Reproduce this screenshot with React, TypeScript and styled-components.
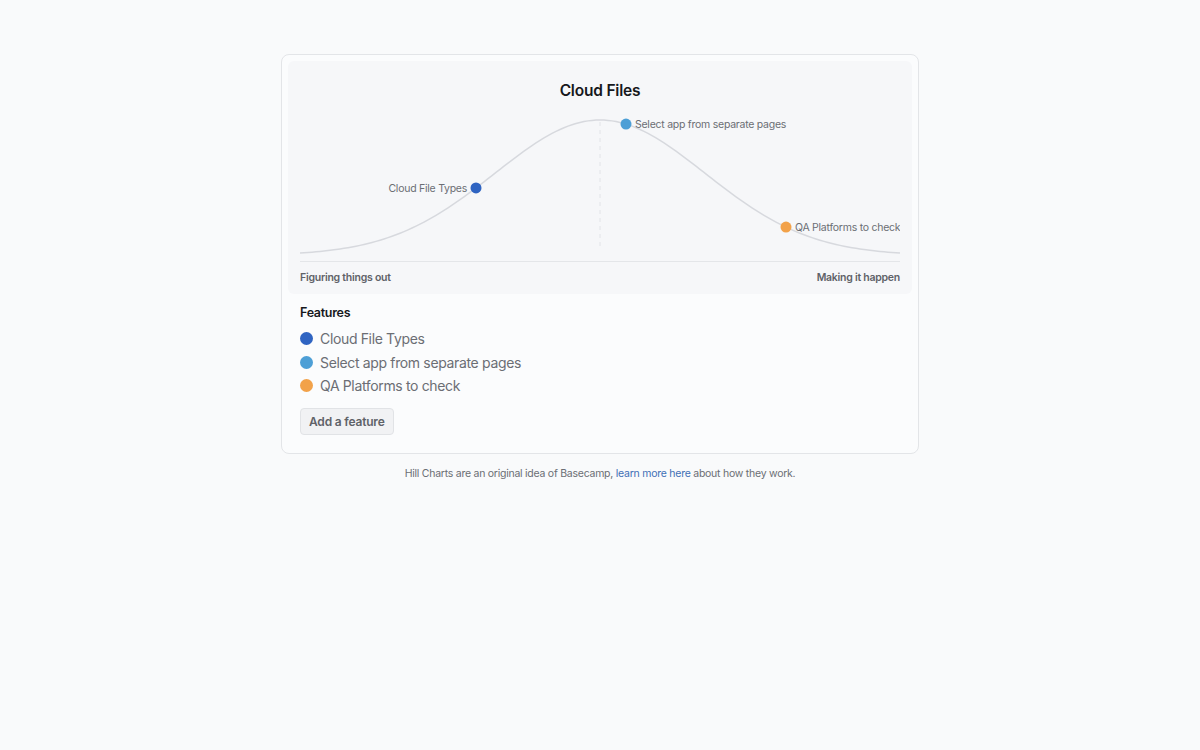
import React, { FC } from 'react';
import styled, { createGlobalStyle } from 'styled-components';

const COLORS = {
  page: '#f9fafb',
  card: '#fbfcfd',
  panel: '#f6f7f9',
  border: '#e3e5e8',
  title: '#16181c',
  text: '#6b6e74',
  muted: '#5f6268',
  curve: '#d7d9de',
  link: '#3f6fb6',
};

interface feature {
  name: string;
  color: string;
  x: number;
  side: 'left' | 'right';
}

const FEATURES: feature[] = [
  { name: 'Cloud File Types', color: '#2f64c2', x: 176, side: 'left' },
  { name: 'Select app from separate pages', color: '#4d9fd6', x: 326, side: 'right' },
  { name: 'QA Platforms to check', color: '#f2a24a', x: 486, side: 'right' },
];

const W = 600;
const H = 160;
const BASE = 152;
const PEAK = 19;
const SPREAD = 105;

// gaussian, shifted so both ends sit on the base line
const EDGE = Math.exp(-Math.pow(W / 2 / SPREAD, 2) / 2);
const hillY = (x: number) => {
  const g = Math.exp(-Math.pow((x - W / 2) / SPREAD, 2) / 2);
  return BASE - (BASE - PEAK) * ((g - EDGE) / (1 - EDGE));
};

const hillPath = () => {
  const pts: string[] = [];
  for (let x = 0; x <= W; x += 4) {
    pts.push(`${x === 0 ? 'M' : 'L'}${x},${hillY(x).toFixed(2)}`);
  }
  return pts.join(' ');
};

const GlobalStyle = createGlobalStyle`
  body {
    margin: 0;
    background: ${COLORS.page};
    font-family: Inter, "Liberation Sans", sans-serif;
  }
`;

const HillChart: FC<{ items: feature[] }> = ({ items }) => (
  <ChartSvg width={W} height={H} viewBox={`0 0 ${W} ${H}`}>
    <line
      x1={W / 2}
      y1={21}
      x2={W / 2}
      y2={147}
      stroke="#e2e4e8"
      strokeWidth={1}
      strokeDasharray="4 4"
    />
    <path d={hillPath()} fill="none" stroke={COLORS.curve} strokeWidth={1.5} />
    {items.map((item) => {
      const y = hillY(item.x);
      return (
        <g key={item.name}>
          <circle cx={item.x} cy={y} r={5.5} fill={item.color} />
          <ChartLabel
            x={item.side === 'left' ? item.x - 9 : item.x + 9}
            y={y + 4}
            textAnchor={item.side === 'left' ? 'end' : 'start'}
          >
            {item.name}
          </ChartLabel>
        </g>
      );
    })}
  </ChartSvg>
);

const App: FC = () => {
  return (
    <Page>
      <GlobalStyle />
      <Card>
        <ChartPanel>
          <Title>Cloud Files</Title>
          <HillChart items={FEATURES} />
          <Axis>
            <span>Figuring things out</span>
            <span>Making it happen</span>
          </Axis>
        </ChartPanel>
        <Features>
          <FeaturesTitle>Features</FeaturesTitle>
          <FeatureList>
            {FEATURES.map((item) => (
              <FeatureItem key={item.name}>
                <Dot color={item.color} />
                {item.name}
              </FeatureItem>
            ))}
          </FeatureList>
          <AddButton>Add a feature</AddButton>
        </Features>
      </Card>
      <Footer>
        Hill Charts are an original idea of Basecamp, <a href="#">learn more here</a> about
        how they work.
      </Footer>
    </Page>
  );
};

const Page = styled.div`
  display: flex;
  flex-direction: column;
  align-items: center;
  padding-top: 54px;
  min-height: 750px;
  box-sizing: border-box;
`;

const Card = styled.div`
  width: 638px;
  box-sizing: border-box;
  padding: 6px 6px 18px;
  border: 1px solid ${COLORS.border};
  border-radius: 8px;
  background: ${COLORS.card};
`;

const ChartPanel = styled.div`
  display: flex;
  flex-direction: column;
  padding: 20px 12px 9px;
  border-radius: 6px;
  background: ${COLORS.panel};
`;

const Title = styled.h1`
  margin: 0;
  font-size: 15.5px;
  line-height: 20px;
  font-weight: 600;
  letter-spacing: -0.2px;
  text-align: center;
  color: ${COLORS.title};
`;

const ChartSvg = styled.svg`
  display: block;
`;

const ChartLabel = styled.text`
  font-size: 10.5px;
  letter-spacing: -0.25px;
  fill: ${COLORS.text};
`;

const Axis = styled.div`
  display: flex;
  justify-content: space-between;
  padding-top: 9px;
  border-top: 1px solid #e4e6e9;
  font-size: 10.5px;
  line-height: 14px;
  font-weight: 600;
  letter-spacing: -0.25px;
  color: ${COLORS.muted};
`;

const Features = styled.div`
  display: flex;
  flex-direction: column;
  align-items: flex-start;
  padding: 11px 12px 0;
`;

const FeaturesTitle = styled.h2`
  margin: 0;
  font-size: 12.5px;
  line-height: 16px;
  font-weight: 600;
  letter-spacing: -0.3px;
  color: ${COLORS.title};
`;

const FeatureList = styled.ul`
  margin: 6px 0 0;
  padding: 0;
  list-style: none;
`;

const FeatureItem = styled.li`
  display: flex;
  align-items: center;
  gap: 7px;
  height: 23.5px;
  font-size: 14px;
  letter-spacing: -0.35px;
  color: ${COLORS.text};
`;

const Dot = styled.span<{ color: string }>`
  width: 13px;
  height: 13px;
  border-radius: 50%;
  background: ${(p) => p.color};
`;

const AddButton = styled.button`
  margin-top: 10px;
  height: 27px;
  padding: 0 8px;
  border: 1px solid #e1e3e6;
  border-radius: 4px;
  background: #f1f2f4;
  font-family: inherit;
  font-size: 12px;
  font-weight: 600;
  letter-spacing: -0.2px;
  color: ${COLORS.muted};
  cursor: pointer;
`;

const Footer = styled.p`
  margin: 13px 0 0;
  font-size: 10.5px;
  line-height: 14px;
  letter-spacing: -0.25px;
  color: ${COLORS.text};

  a {
    color: ${COLORS.link};
    text-decoration: none;
  }
`;

export default App;
